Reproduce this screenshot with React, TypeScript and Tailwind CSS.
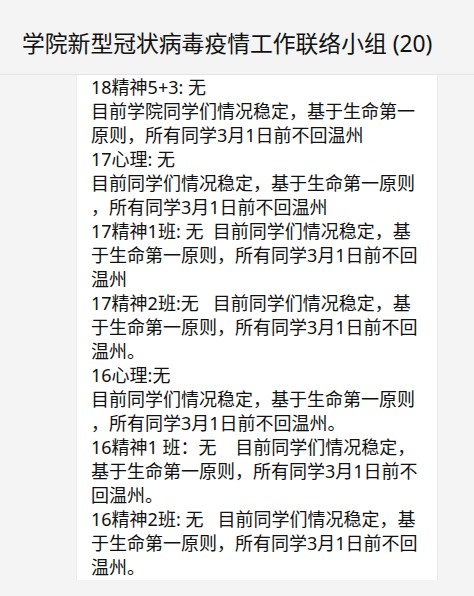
const lines = [
  '18精神5+3: 无',
  '目前学院同学们情况稳定，基于生命第一',
  '原则，所有同学3月1日前不回温州',
  '17心理: 无',
  '目前同学们情况稳定，基于生命第一原则',
  '，所有同学3月1日前不回温州',
  '17精神1班: 无  目前同学们情况稳定，基',
  '于生命第一原则，所有同学3月1日前不回',
  '温州',
  '17精神2班:无   目前同学们情况稳定，基',
  '于生命第一原则，所有同学3月1日前不回',
  '温州。',
  '16心理:无',
  '目前同学们情况稳定，基于生命第一原则',
  '，所有同学3月1日前不回温州。',
  '16精神1 班：无    目前同学们情况稳定，',
  '基于生命第一原则，所有同学3月1日前不',
  '回温州。',
  '16精神2班: 无   目前同学们情况稳定，基',
  '于生命第一原则，所有同学3月1日前不回',
  '温州。',
]

export default function App() {
  return (
    <div
      className="w-[474px] h-[596px] bg-[#f4f4f4] flex flex-col overflow-hidden text-[#111]"
      style={{ fontFamily: '"Noto Sans", "Noto Sans CJK SC", sans-serif' }}
    >
      <header className="h-[75px] shrink-0 border-b border-[#e4e4e4] flex items-center pl-[22px] pt-[14px]">
        <h1 className="text-[22.8px] leading-none">学院新型冠状病毒疫情工作联络小组 (20)</h1>
      </header>

      <div className="flex-1 flex">
        <div className="ml-[76px] w-[362px] h-[505px] bg-white border-x border-[#ececec] pl-[14px]">
          {lines.map((l, i) => (
            <div key={i} className="whitespace-pre text-[18px] leading-[24px]">
              {l}
            </div>
          ))}
        </div>
      </div>
    </div>
  )
}
